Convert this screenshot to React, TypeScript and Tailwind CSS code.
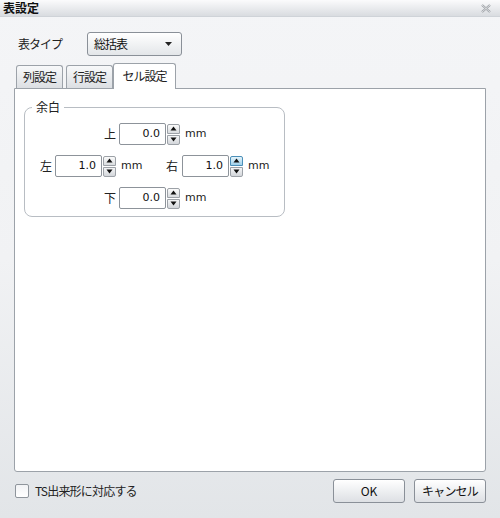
import React from "react";

const FONT = { fontFamily: '"Noto Sans CJK JP", "Noto Sans", sans-serif' };
const NUM = { fontFamily: '"DejaVu Sans", Verdana, sans-serif' };

function Spinner({ hot = false }: { hot?: boolean }) {
  return (
    <div className="flex flex-col ml-[1px] w-[13px] h-[21px] gap-px">
      <div
        className={
          "flex-1 flex items-center justify-center rounded-t-[2px] border " +
          (hot
            ? "border-[#4b8fb8] bg-gradient-to-b from-[#e6f4fb] to-[#9fd0ea]"
            : "border-[#9ca1a7] bg-gradient-to-b from-[#fbfbfb] to-[#d9dcdf]")
        }
      >
        <svg width="7" height="5" viewBox="0 0 7 5">
          <path d="M3.5 0.5 L6.5 4.5 L0.5 4.5 Z" fill="#111" />
        </svg>
      </div>
      <div className="flex-1 flex items-center justify-center rounded-b-[2px] border border-[#9ca1a7] bg-gradient-to-b from-[#f4f5f6] to-[#d3d6da]">
        <svg width="7" height="5" viewBox="0 0 7 5">
          <path d="M0.5 0.5 L6.5 0.5 L3.5 4.5 Z" fill="#111" />
        </svg>
      </div>
    </div>
  );
}

function NumField({ label, value, hot, wide }: { label: string; value: string; hot?: boolean; wide?: boolean }) {
  return (
    <div className={"flex items-center " + (wide ? "w-[126px]" : "")}>
      <span className={"text-[12px] text-[#222] " + (hot ? "w-[16px]" : "w-[15px]")}>{label}</span>
      <div
        className="w-[47px] h-[22px] border border-[#8d939a] rounded-[2px] bg-white flex items-center justify-end pr-[5px] text-[11px] text-[#111]"
        style={NUM}
      >
        {value}
      </div>
      <Spinner hot={hot} />
      <span className="ml-[5px] text-[11px] text-[#222]" style={NUM}>
        mm
      </span>
    </div>
  );
}

function Tab({ label, active = false, gap = false }: { label: string; active?: boolean; gap?: boolean }) {
  return active ? (
    <div className="h-[26px] -mb-px w-[63px] flex items-start justify-center pt-[3px] border border-b-0 border-[#9ca2a9] rounded-t-[3px] bg-white text-[12px] tracking-[-1px] text-[#222] relative z-10">
      {label}
    </div>
  ) : (
    <div
      className={
        "h-[23px] w-[47px] flex items-center justify-center border border-b-0 border-[#9ca2a9] rounded-t-[3px] bg-gradient-to-b from-[#f8f9fa] to-[#dcdfe3] text-[12px] tracking-[-1px] text-[#222] " +
        (gap ? "mr-[3px]" : "")
      }
    >
      {label}
    </div>
  );
}

export default function App() {
  return (
    <div
      className="w-[500px] h-[518px] flex flex-col bg-gradient-to-b from-[#f4f5f7] via-[#f1f2f4] to-[#e2e5e8] overflow-hidden"
      style={FONT}
    >
      {/* タイトルバー */}
      <div className="h-[17px] flex items-center justify-between pl-[3px] pr-[9px] bg-gradient-to-b from-[#fbfbfc] to-[#d9dce0] border-b border-[#cfd3d8]">
        <span className="text-[12px] font-bold text-[#111] leading-none">表設定</span>
        <svg width="10" height="9" viewBox="0 0 10 9">
          <path d="M1 1 L9 8 M9 1 L1 8" stroke="#9a9ea3" strokeWidth="2.2" />
          <path d="M1 1 L9 8 M9 1 L1 8" stroke="#eceef0" strokeWidth="0.8" />
        </svg>
      </div>

      <div className="flex-1 flex flex-col px-[14px]">
        {/* 表タイプ */}
        <div className="mt-[15px] h-[24px] flex items-center">
          <span className="pl-[4px] w-[73px] text-[12px] tracking-[-1px] text-[#222]">表タイプ</span>
          <div className="w-[95px] h-[24px] flex items-center justify-between pl-[6px] pr-[9px] border border-[#8a9098] rounded-[3px] bg-gradient-to-b from-[#ffffff] to-[#e3e6e9] text-[12px] tracking-[-1px] text-[#111]">
            <span>総括表</span>
            <svg width="7" height="4" viewBox="0 0 7 4">
              <path d="M0 0 L7 0 L3.5 4 Z" fill="#222" />
            </svg>
          </div>
        </div>

        {/* タブ */}
        <div className="mt-[7px] flex items-end pl-[2px]">
          <Tab label="列設定" gap />
          <Tab label="行設定" />
          <Tab label="セル設定" active />
        </div>

        {/* タブ内容 */}
        <div className="h-[384px] border border-[#9ca2a9] rounded-b-[3px] bg-white pt-[11px] pl-[9px]">
          <fieldset className="w-[261px] min-w-0 h-[117px] border border-[#b8bdc3] rounded-[8px] px-0 pb-0">
            <legend className="ml-[7px] px-[4px] text-[12px] text-[#222] leading-[14px]">余白</legend>
            <div className="flex flex-col gap-[10px] pt-[9px]">
              <div className="pl-[79px]">
                <NumField label="上" value="0.0" />
              </div>
              <div className="pl-[15px] flex items-center">
                <NumField label="左" value="1.0" wide />
                <NumField label="右" value="1.0" hot />
              </div>
              <div className="pl-[79px]">
                <NumField label="下" value="0.0" />
              </div>
            </div>
          </fieldset>
        </div>

        {/* フッター */}
        <div className="mt-[7px] flex items-center justify-between">
          <label className="flex items-center gap-[6px] pl-[1px]">
            <span className="w-[14px] h-[14px] border border-[#8f959c] rounded-[2px] bg-gradient-to-b from-[#f2f3f5] to-[#ffffff]" />
            <span className="text-[12px] tracking-[-0.8px] text-[#222]">TS出来形に対応する</span>
          </label>
          <div className="flex gap-[9px]">
            <button className="w-[72px] h-[24px] border border-[#8a9098] rounded-[3px] bg-gradient-to-b from-[#ffffff] to-[#dde0e4] text-[12px] text-[#111]">
              OK
            </button>
            <button className="w-[72px] h-[24px] border border-[#8a9098] rounded-[3px] bg-gradient-to-b from-[#ffffff] to-[#dde0e4] text-[12px] tracking-[-0.8px] text-[#111]">
              キャンセル
            </button>
          </div>
        </div>
      </div>
    </div>
  );
}
